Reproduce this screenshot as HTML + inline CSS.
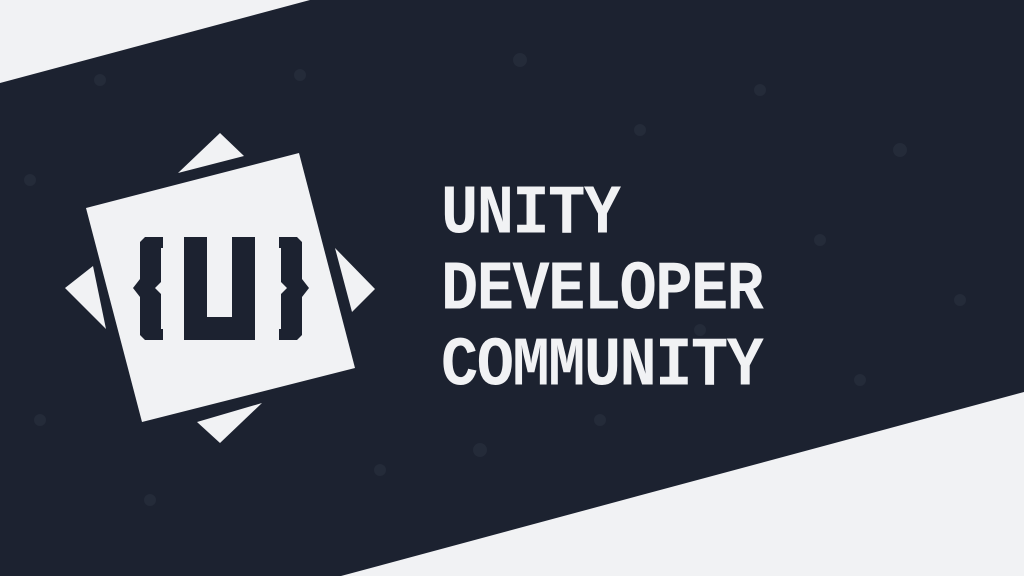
<!DOCTYPE html>
<html><head><meta charset="utf-8"><style>
html,body{margin:0;padding:0;width:1024px;height:576px;overflow:hidden;background:#f1f2f4}
svg{position:absolute;left:0;top:0}
.t{position:absolute;left:441px;font-family:"Liberation Mono","DejaVu Sans Mono",monospace;font-weight:bold;color:#f1f2f4;font-size:62px;line-height:62px;transform-origin:0 0;transform:scale(1.0,1.12);letter-spacing:-1.5px;-webkit-text-stroke:0px}
</style></head><body>
<svg width="1024" height="576" viewBox="0 0 1024 576">
<polygon points="310,0 1024,0 1024,392 341,576 0,576 0,83" fill="#1c2230"/>
<g fill="#242b39">
<circle cx="100" cy="80" r="6"/><circle cx="300" cy="75" r="6"/><circle cx="520" cy="60" r="7"/><circle cx="640" cy="130" r="6"/><circle cx="760" cy="90" r="6"/><circle cx="900" cy="150" r="7"/><circle cx="820" cy="240" r="6"/><circle cx="960" cy="300" r="6"/><circle cx="30" cy="180" r="6"/><circle cx="40" cy="420" r="6"/><circle cx="150" cy="500" r="6"/><circle cx="480" cy="450" r="7"/><circle cx="600" cy="420" r="6"/><circle cx="700" cy="330" r="6"/><circle cx="380" cy="470" r="6"/><circle cx="860" cy="380" r="6"/>
</g>
<g fill="#f1f2f4">
<polygon points="86,208 299,153 355,368 142,422"/>
<polygon points="220,133 178,173 244,156"/>
<polygon points="65,288 93,266 106,329"/>
<polygon points="375,289 335,248 352,312"/>
<polygon points="220,443 197,422 262,403"/>
</g>
<g fill="#1c2230">
<polygon points="145,237 163,237 163,248 161,248 161,282 155,288 161,294 161,329 163,329 163,340 145,340 140,335 140,297 133,288 140,279 140,242"/>
<polygon points="184,237 207,237 207,317 232,317 232,237 255,237 255,340 184,340"/>
<polygon points="300,237 282,237 282,248 284,248 284,282 290,288 284,294 284,329 282,329 282,340 300,340 305,335 305,297 312,288 305,279 305,242" transform="translate(-3,0)"/>
</g>
</svg>
<div class="t" style="top:180px">UNITY</div>
<div class="t" style="top:256px">DEVELOPER</div>
<div class="t" style="top:332px">COMMUNITY</div>
</body></html>
